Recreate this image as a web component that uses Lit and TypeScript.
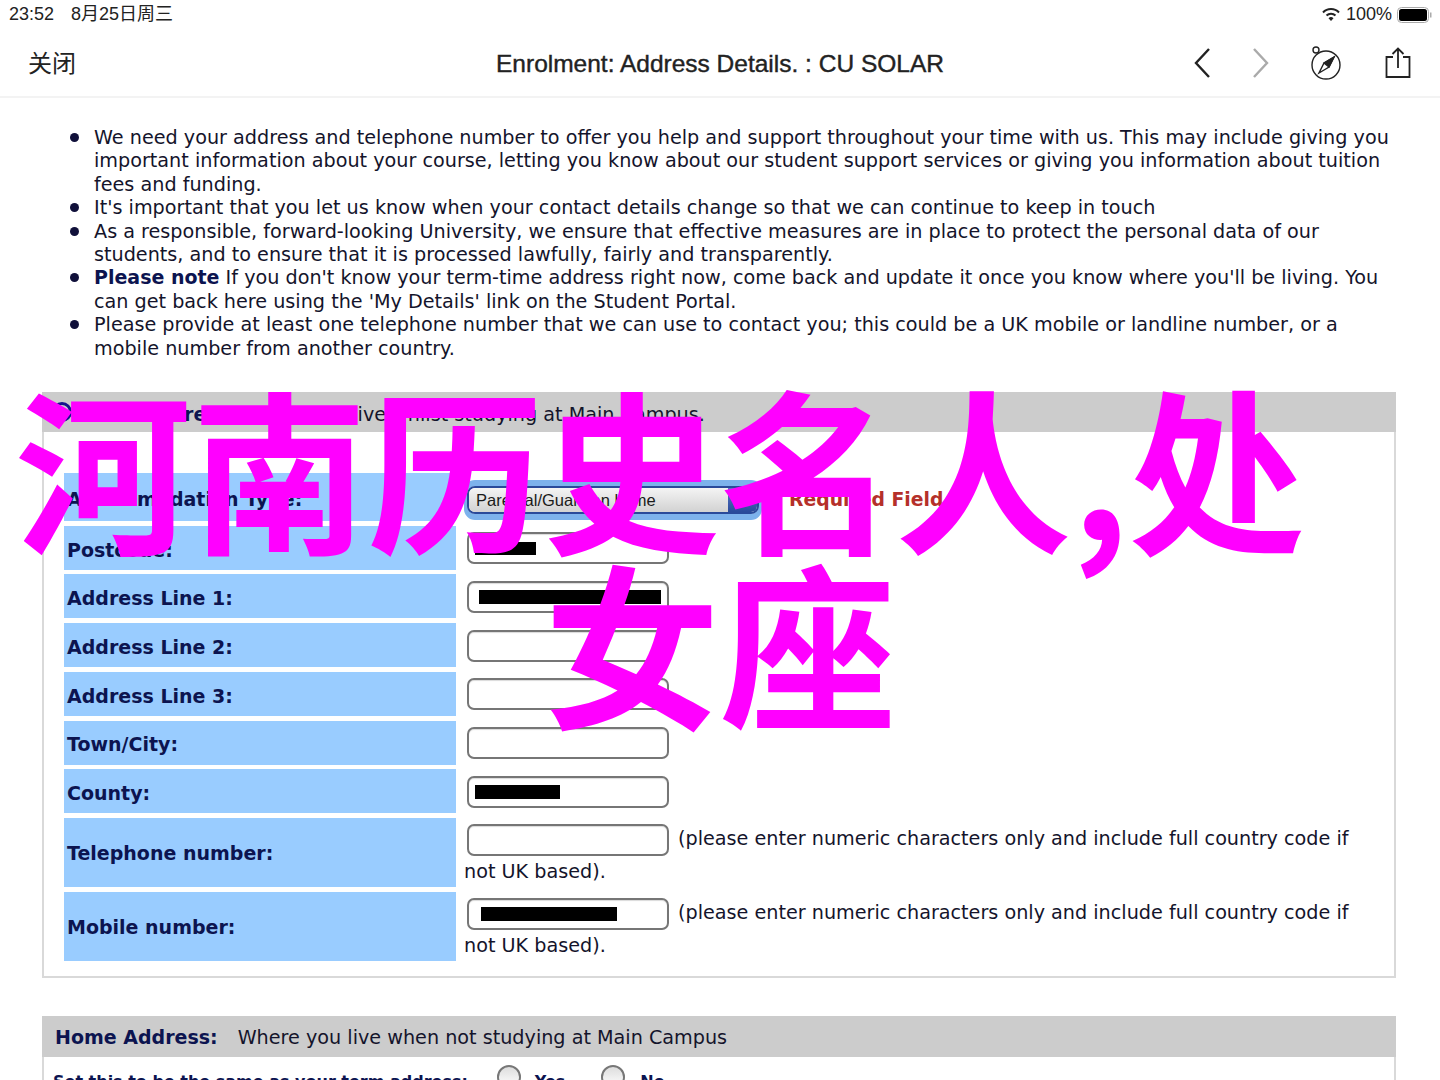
import { LitElement, html, css } from 'lit';
import { customElement } from 'lit/decorators.js';

type Row = {
  label: string;
  tall?: boolean;
  mark?: [number, number, number];
  hint?: boolean;
};

const rows: Row[] = [
  { label: 'Postcode:', mark: [6, 61, 13] },
  { label: 'Address Line 1:', mark: [10, 182, 14] },
  { label: 'Address Line 2:' },
  { label: 'Address Line 3:' },
  { label: 'Town/City:' },
  { label: 'County:', mark: [6, 85, 14] },
  { label: 'Telephone number:', tall: true, hint: true },
  { label: 'Mobile number:', tall: true, hint: true, mark: [12, 136, 14] }
];

@customElement('app-root')
export class AppRoot extends LitElement {
  static styles = css`
    :host {
      display: block;
      position: relative;
      height: 1080px;
      overflow: hidden;
      background: #fff;
      color: #14142b;
      font-family: "DejaVu Sans", Verdana, sans-serif;
      font-size: 19.2px;
      line-height: 23.4px;
    }
    .status {
      display: flex;
      align-items: center;
      justify-content: space-between;
      box-sizing: border-box;
      height: 28px;
      padding: 1px 7px 0 9px;
      font-family: "Liberation Sans", "Noto Sans CJK SC", sans-serif;
      font-size: 18px;
      color: #222;
    }
    .status .left { display: flex; gap: 17px; }
    .status .right { display: flex; align-items: center; gap: 5px; }
    .nav {
      display: grid;
      grid-template-columns: 1fr auto 1fr;
      align-items: center;
      height: 70px;
      padding: 0 28px 0 28px;
      border-bottom: 2px solid #f3f3f3;
      box-sizing: border-box;
      font-family: "Liberation Sans", "Noto Sans CJK SC", sans-serif;
      color: #222;
    }
    .close { font-size: 24px; font-family: "Noto Sans CJK SC", sans-serif; }
    .title { font-size: 24.5px; margin-top: 3px; -webkit-text-stroke: 0.4px #222; }
    .tools { display: flex; justify-content: flex-end; align-items: center; padding-top: 2px; }
    .tools svg { display: block; }
    .tools .fwd { margin-left: 29px; }
    .tools .compass { margin-left: 33px; }
    .tools .share { margin-left: 41px; }
    ul {
      margin: 28px 0 32px;
      padding: 0 40px 0 94px;
      list-style: none;
    }
    li::before {
      content: "";
      float: left;
      width: 9px;
      height: 9px;
      margin: 7px 15px 0 -24px;
      border-radius: 50%;
      background: #10103a;
    }
    .panel {
      margin: 0 44px 0 42px;
      border: 2px solid #d9d9d9;
      border-top: none;
    }
    .head {
      display: flex;
      align-items: center;
      box-sizing: border-box;
      height: 41px;
      padding: 3px 0 0 13px;
      background: #cccccc;
      margin: 0 -2px;
    }
    .head.term { height: 40px; padding: 0 0 0 10px; }
    .dot {
      box-sizing: border-box;
      width: 20px;
      height: 20px;
      margin-right: 11px;
      border: 3px solid #14148c;
      border-radius: 50%;
    }
    .head.term span:last-child { padding-top: 5px; }
    .head .where { margin-left: 20px; }
    b { color: #0c1450; font-size: 19px; }
    .form {
      display: grid;
      gap: 4.7px;
      padding: 41px 0 15px 20px;
    }
    .row {
      display: grid;
      grid-template-columns: 392px 1fr;
      column-gap: 8px;
      min-height: 44px;
      align-items: center;
    }
    .row.first { min-height: 48px; }
    .row.tall { min-height: 69px; }
    .label {
      align-self: stretch;
      display: flex;
      align-items: center;
      padding: 5px 0 0 3px;
      background: #99ccff;
      font-size: 19px;
      font-weight: 700;
      color: #0c1450;
    }
    .tall .label { padding-top: 3px; }
    .field { display: block; padding-top: 1px; }
    .input {
      display: inline-flex;
      align-items: center;
      box-sizing: border-box;
      width: 202px;
      height: 32px;
      margin: 0 9px 0 3px;
      vertical-align: middle;
      border: 2px solid #767676;
      border-radius: 7px;
      background: #fff;
      box-shadow: inset 0 1px 1px rgba(0, 0, 0, 0.15);
    }
    .tall .field { padding: 0 40px 2px 0; }
    .tall .input { margin-top: 5px; margin-bottom: 4px; }
    .black { display: block; background: #000; }
    .select {
      display: inline-flex;
      box-sizing: border-box;
      width: 292px;
      height: 28px;
      margin: 4px 30px 0 3px;
      vertical-align: middle;
      overflow: hidden;
      border: 2px solid #2a4a9a;
      border-radius: 8px;
      box-shadow: 0 -3px 0 3px #7db2ec, 0 3px 0 3px #7db2ec;
      font-family: "Liberation Sans", sans-serif;
      font-size: 16.500px;
      line-height: 24px;
      color: #1a1a1a;
    }
    .select span { flex: 1; padding-left: 7px; background: linear-gradient(#f4f4f4, #d2d2d2); }
    .select i { display: flex; width: 29px; align-items: center; justify-content: center; background: linear-gradient(#5a78c8, #2a4a9a); }
    .select i::after {
      content: "";
      border: 3px solid transparent;
      border-top: 4px solid #fff;
      margin-top: 4px;
    }
    .req { font-weight: 700; color: #b5302a; font-size: 18.800px; vertical-align: -2px; }
    .spacer { height: 38px; }
    .same {
      display: flex;
      align-items: flex-start;
      padding: 8px 0 0 9px;
      font-size: 16px;
      font-weight: 700;
      color: #0c1450;
    }
    .same span:not(.radio) { margin-top: 5px; }
    .same .yes { margin-left: 14px; }
    .same .no { margin-left: 15px; }
    .radio {
      box-sizing: border-box;
      width: 24px;
      height: 24px;
      margin-left: 29px;
      border: 2px solid #777;
      border-radius: 50%;
      background: linear-gradient(#ddd, #fff);
    }
    .radio.second { margin-left: 36px; }
    .overlay {
      position: absolute;
      left: 0;
      right: 0;
      top: 377px;
      text-align: center;
      color: #ff00ff;
      font-family: "Noto Sans CJK SC", sans-serif;
      font-size: 176px;
      font-weight: 700;
      line-height: 175px;
    }
    .overlay .one { margin-right: 120px; }
  `;

  renderField(r: Row) {
    const black = r.mark
      ? html`<span class="black" style="margin-left:${r.mark[0]}px;width:${r.mark[1]}px;height:${r.mark[2]}px"></span>`
      : '';
    return html`<div class="field">
      <span class="input">${black}</span>${r.hint
        ? '(please enter numeric characters only and include full country code if not UK based).'
        : ''}
    </div>`;
  }

  render() {
    return html`
      <div class="status">
        <div class="left"><span>23:52</span><span>8月25日周三</span></div>
        <div class="right">
          <svg width="20" height="15" viewBox="0 0 20 15" fill="none" stroke="#222">
            <path d="M2 5.500a11 11 0 0 1 16 0" stroke-width="2" />
            <path d="M5.500 8.500a6.500 6.500 0 0 1 9 0" stroke-width="2" />
            <path d="M10 14l-2.500-2.800a3.500 3.500 0 0 1 5 0z" fill="#222" stroke="none" />
          </svg>
          <span>100%</span>
          <svg width="36" height="16" viewBox="0 0 36 16">
            <rect x="0.500" y="0.500" width="31" height="15" rx="4" fill="none" stroke="#aaa" />
            <rect x="2" y="2" width="28" height="12" rx="2.500" fill="#000" />
            <rect x="33" y="5.500" width="1.500" height="5" fill="#aaa" />
          </svg>
        </div>
      </div>
      <div class="nav">
        <span class="close">关闭</span>
        <span class="title">Enrolment: Address Details. : CU SOLAR</span>
        <div class="tools">
          <svg width="30" height="34" viewBox="0 0 30 34" fill="none" stroke="#222" stroke-width="2.400">
            <path d="M22 3L9 17l13 14" />
          </svg>
          <svg class="fwd" width="30" height="34" viewBox="0 0 30 34" fill="none" stroke="#aaa" stroke-width="2.400">
            <path d="M8 3l13 14L8 31" />
          </svg>
          <svg class="compass" width="34" height="36" viewBox="0 0 34 36" fill="none" stroke="#222" stroke-width="1.400">
            <circle cx="17" cy="20" r="14" />
            <circle cx="7" cy="5" r="3" />
            <path d="M25 12l-10 6-5 10 10-6z" />
            <path d="M25 12l-10 6 5 4z" fill="#222" />
          </svg>
          <svg class="share" width="28" height="32" viewBox="0 0 28 32" fill="none" stroke="#222" stroke-width="1.800">
            <path d="M9 10H2.500v20h23V10H19" />
            <path d="M14 21V2M8.500 7L14 1.500 19.500 7" />
          </svg>
        </div>
      </div>
      <ul>
        <li>We need your address and telephone number to offer you help and support throughout your time with us. This may include giving you important information about your course, letting you know about our student support services or giving you information about tuition fees and funding.</li>
        <li>It's important that you let us know when your contact details change so that we can continue to keep in touch</li>
        <li>As a responsible, forward-looking University, we ensure that effective measures are in place to protect the personal data of our students, and to ensure that it is processed lawfully, fairly and transparently.</li>
        <li><b>Please note</b> If you don't know your term-time address right now, come back and update it once you know where you'll be living. You can get back here using the 'My Details' link on the Student Portal.</li>
        <li>Please provide at least one telephone number that we can use to contact you; this could be a UK mobile or landline number, or a mobile number from another country.</li>
      </ul>
      <section class="panel">
        <div class="head term">
          <span class="dot"></span>
          <span><b>Term Address:</b> Where you live whilst studying at Main Campus.</span>
        </div>
        <div class="form">
          <div class="row first">
            <div class="label">Accommodation Type:</div>
            <div class="field">
              <span class="select">
                <span>Parental/Guardian home</span>
                <i></i>
              </span><span class="req">Required Field</span>
            </div>
          </div>
          ${rows.map(
            (r) => html`<div class="row ${r.tall ? 'tall' : ''}">
              <div class="label">${r.label}</div>
              ${this.renderField(r)}
            </div>`
          )}
        </div>
      </section>
      <div class="spacer"></div>
      <section class="panel home">
        <div class="head">
          <b>Home Address:</b><span class="where">Where you live when not studying at Main Campus</span>
        </div>
        <div class="same">
          <span>Set this to be the same as your term address:</span>
          <span class="radio"></span>
          <span class="yes">Yes</span>
          <span class="radio second"></span>
          <span class="no">No</span>
        </div>
      </section>
      <div class="overlay"><div class="one">河南历史名人,处</div><div>女座</div></div>
    `;
  }
}
